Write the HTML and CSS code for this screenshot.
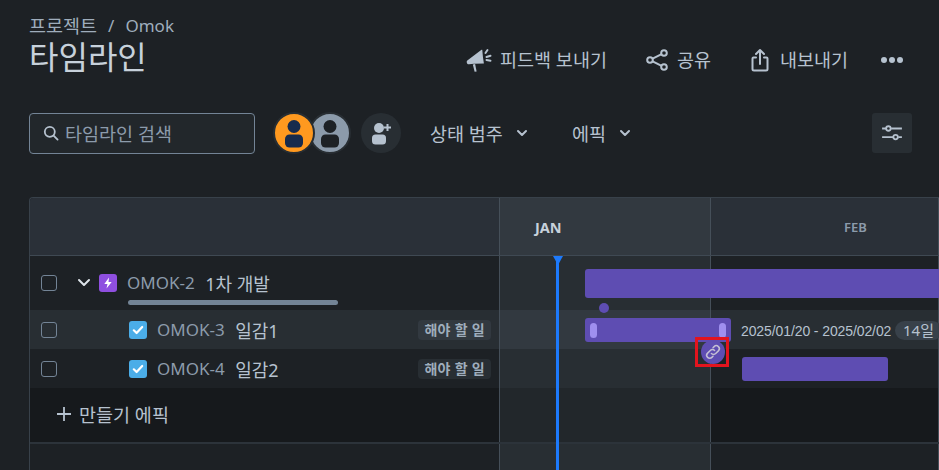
FILE: index.html
```html
<!DOCTYPE html>
<html lang="ko">
<head>
<meta charset="utf-8">
<title>타임라인</title>
<link rel="stylesheet" href="styles.css">
</head>
<body>
<div class="page">
  <header class="head">
    <div class="titles">
      <div class="crumbs"><span>프로젝트</span><span class="sep">/</span><span class="latin">Omok</span></div>
      <h1 class="title">타임라인</h1>
    </div>
    <div class="actions">
      <div class="action a-feedback">
        <svg class="ic" width="28" height="26" viewBox="0 0 28 26"><path fill="#b6c2cf" d="M1.300 13.500 15.500 2.800c.3-.3.8-.1.8.3.3 4.500.8 9 1.600 13.400L8 16.800 3 17.300c-2 .2-3-2.500-1.700-3.800z"/><path fill="#b6c2cf" d="M6.800 17.500l2.300-.4 1.500 7.300-2 .4z"/><path stroke="#b6c2cf" stroke-width="2" stroke-linecap="round" fill="none" d="M19.500 6l2-3M20.500 10l4-1.300M20.500 13l4 .7"/></svg>
        <span>피드백 보내기</span>
      </div>
      <div class="action a-share">
        <svg class="ic" width="24" height="24" viewBox="0 0 24 24" fill="none" stroke="#b6c2cf" stroke-width="2"><circle cx="19" cy="5" r="2.800"/><circle cx="19" cy="19" r="2.800"/><circle cx="5" cy="12" r="2.800"/><path d="M7.600 10.700l9-4.500M7.600 13.300l9 4.500"/></svg>
        <span>공유</span>
      </div>
      <div class="action a-export">
        <svg class="ic" width="20" height="24" viewBox="0 0 20 24" fill="none" stroke="#b6c2cf" stroke-width="2" stroke-linecap="round" stroke-linejoin="round"><path d="M6 9.500H3.500a1 1 0 0 0-1 1V21a1.500 1.500 0 0 0 1.500 1.500h12a1.500 1.500 0 0 0 1.500-1.500V10.500a1 1 0 0 0-1-1H14"/><path d="M10 16V2.500M6 6l4-4 4 4"/></svg>
        <span>내보내기</span>
      </div>
      <div class="more"><i></i><i></i><i></i></div>
    </div>
  </header>

  <div class="toolbar">
    <div class="search">
      <svg width="16" height="16" viewBox="0 0 16 16" fill="none" stroke="#b6c2cf" stroke-width="1.800" stroke-linecap="round"><circle cx="6.800" cy="6.800" r="5"/><path d="M10.600 10.600l4 4"/></svg>
      <span>타임라인 검색</span>
    </div>
    <div class="avatars">
      <div class="avatar av-orange">
        <svg width="38" height="38" viewBox="0 0 38 38"><circle cx="19" cy="12.500" r="6.500" fill="#172b4d"/><rect x="10" y="20.500" width="18" height="13" rx="4.500" fill="#172b4d"/></svg>
      </div>
      <div class="avatar av-grey">
        <svg width="38" height="38" viewBox="0 0 38 38"><circle cx="19" cy="12.500" r="6.500" fill="#1d2125"/><rect x="10" y="20.500" width="18" height="13" rx="4.500" fill="#1d2125"/></svg>
      </div>
    </div>
    <div class="add-user">
      <svg width="24" height="24" viewBox="0 0 24 24" fill="#b6c2cf"><circle cx="10" cy="7" r="5"/><rect x="3" y="13.500" width="14" height="10" rx="3.500"/><path d="M17.500 3h2v2.500H22v2h-2.500V10h-2V7.500H15v-2h2.500z"/></svg>
    </div>
    <div class="filter f-status"><span>상태 범주</span><svg class="chev" width="12" height="8" viewBox="0 0 12 8" fill="none" stroke="#b6c2cf" stroke-width="2" stroke-linecap="round" stroke-linejoin="round"><path d="M2 2l4 4 4-4"/></svg></div>
    <div class="filter f-epic"><span>에픽</span><svg class="chev" width="12" height="8" viewBox="0 0 12 8" fill="none" stroke="#b6c2cf" stroke-width="2" stroke-linecap="round" stroke-linejoin="round"><path d="M2 2l4 4 4-4"/></svg></div>
    <div class="settings">
      <svg width="22" height="18" viewBox="0 0 24 20" fill="none" stroke="#b6c2cf" stroke-width="2"><path d="M1 5h4.500M11 5h12M1 14.500h12.500M19 14.500h4"/><circle cx="8" cy="5" r="2.500"/><circle cx="16" cy="14.500" r="2.500"/></svg>
    </div>
  </div>

  <section class="grid">
    <div class="row r-head">
      <div class="left"></div>
      <div class="month m-jan"><span>JAN</span></div>
      <div class="month m-feb"><span>FEB</span></div>
    </div>

    <div class="row r-epic">
      <div class="left">
        <span class="check"></span>
        <svg class="expand" width="14" height="10" viewBox="0 0 14 10" fill="none" stroke="#dee4ea" stroke-width="2" stroke-linecap="round" stroke-linejoin="round"><path d="M2 2l5 5 5-5"/></svg>
        <span class="type t-epic"><svg width="12" height="12" viewBox="0 0 12 12"><path fill="#fff" d="M7 .5 2.300 7H5.500L4.500 11.500 9.700 5H6.500z"/></svg></span>
        <span class="key">OMOK-2</span>
        <span class="name">1차 개발</span>
        <span class="progress"></span>
      </div>
      <div class="month m-jan"></div>
      <div class="month m-feb"></div>
    </div>

    <div class="row r-task1">
      <div class="left">
        <span class="check"></span>
        <span class="type t-task"><svg width="12" height="10" viewBox="0 0 12 10" fill="none" stroke="#fff" stroke-width="2.200" stroke-linecap="round" stroke-linejoin="round"><path d="M1.800 5.300l2.800 2.700 5.600-6"/></svg></span>
        <span class="key">OMOK-3</span>
        <span class="name">일감1</span>
        <span class="lozenge">해야 할 일</span>
      </div>
      <div class="month m-jan"></div>
      <div class="month m-feb"></div>
    </div>

    <div class="row r-task2">
      <div class="left">
        <span class="check"></span>
        <span class="type t-task"><svg width="12" height="10" viewBox="0 0 12 10" fill="none" stroke="#fff" stroke-width="2.200" stroke-linecap="round" stroke-linejoin="round"><path d="M1.800 5.300l2.800 2.700 5.600-6"/></svg></span>
        <span class="key">OMOK-4</span>
        <span class="name">일감2</span>
        <span class="lozenge">해야 할 일</span>
      </div>
      <div class="month m-jan"></div>
      <div class="month m-feb"></div>
    </div>

    <div class="row r-create">
      <div class="left">
        <svg width="16" height="16" viewBox="0 0 16 16" stroke="#b6c2cf" stroke-width="1.800"><path d="M8 1v14M1 8h14"/></svg>
        <span>만들기 에픽</span>
      </div>
      <div class="month m-jan"></div>
      <div class="month m-feb"></div>
    </div>

    <div class="row r-empty">
      <div class="left"></div>
      <div class="month m-jan"></div>
      <div class="month m-feb"></div>
    </div>

    <div class="today"></div>
    <div class="marker"></div>
    <div class="bar bar-epic"></div>
    <div class="dot"></div>
    <div class="bar bar-task1"><i></i><i></i></div>
    <div class="dates">2025/01/20 - 2025/02/02</div>
    <div class="days">14일</div>
    <div class="bar bar-task2"></div>
    <div class="link">
      <svg width="18" height="18" viewBox="0 0 18 18" fill="none" stroke="#c4bfd4" stroke-width="1.500" stroke-linecap="round"><path d="M7.400 10.600a3 3 0 0 0 4.300 0l2.700-2.700a3 3 0 0 0-4.300-4.300L9 4.700"/><path d="M10.600 7.400a3 3 0 0 0-4.300 0l-2.700 2.700a3 3 0 0 0 4.300 4.300L9 13.300"/></svg>
    </div>
  </section>
</div>
</body>
</html>
```

FILE: styles.css
```css
*, *::after { box-sizing: border-box; }
html, body { margin: 0; height: 100%; overflow: hidden; }
body {
  background: #1d2125;
  color: #b6c2cf;
  font-family: "Noto Sans", "Noto Sans CJK KR", sans-serif;
  font-size: 18.5px;
}
.page { width: 939px; height: 470px; overflow: hidden; padding-top: 13px; }

.head { display: flex; align-items: flex-start; padding-left: 29px; height: 63px; }
.titles { width: 437px; flex: none; }
.crumbs { display: flex; gap: 11px; height: 25px; line-height: 25px; color: #9fadbc; font-size: 18.5px; }
.latin, .sep { font-size: 17px; }
.title { margin: 2px 0 0; font-family: "Liberation Sans", "Noto Sans CJK KR", sans-serif; font-size: 32px; line-height: 36px; font-weight: 400; color: #c7d1db; }
.actions { display: flex; align-items: center; height: 24px; margin-top: 35px; }
.action { display: flex; align-items: center; height: 24px; line-height: 24px; white-space: nowrap; }
.ic { flex: none; }
.a-feedback { gap: 6px; }
.a-share { gap: 8px; margin-left: 38px; }
.a-export { gap: 10px; margin-left: 39px; }
.more { display: flex; gap: 2px; margin-left: 33px; }
.more i { width: 6px; height: 6px; border-radius: 50%; background: #b6c2cf; }

.toolbar { display: flex; align-items: center; height: 42px; margin-top: 36px; padding-left: 29px; }
.search {
  display: flex; align-items: center; gap: 6px;
  width: 226px; height: 41px; padding-left: 13px;
  border: 1px solid #738496; border-radius: 4px; background: #22272b;
  color: #8c9bab;
}
.avatars { display: flex; margin-left: 18px; }
.avatar {
  width: 42px; height: 42px; padding: 2px; border-radius: 50%;
  border: 2px solid #282e33; overflow: hidden;
}
.avatar svg { display: block; margin: -2px; }
.av-orange { background: #ff991f; position: relative; z-index: 1; }
.av-grey { background: #8c9bab; margin-left: -6px; }
.add-user {
  display: flex; align-items: center; justify-content: center;
  width: 40px; height: 40px; margin-left: 10px; border-radius: 50%; background: #282e33;
}
.filter { display: flex; align-items: center; white-space: nowrap; color: #b6c2cf; }
.f-status { margin-left: 29px; gap: 13px; }
.f-epic { margin-left: 44px; gap: 13px; }
.settings {
  display: flex; align-items: center; justify-content: center;
  width: 40px; height: 40px; margin-left: auto; margin-right: 27px;
  background: #282e33; border-radius: 3px;
}

.grid { position: relative; width: 910px; margin: 43px 0 0 29px; border-left: 1px solid #38414a; border-top: 1px solid #38414a; border-radius: 4px 0 0 0; overflow: hidden; height: 300px; }
.row { display: grid; grid-template-columns: 470px 211px 1fr; }
.left { display: flex; align-items: center; position: relative; border-right: 1px solid #454f59; white-space: nowrap; }
.month { border-right: 1px solid #454f59; display: flex; align-items: center; font-weight: 700; }

.r-head { height: 58px; border-bottom: 1px solid #3f4953; }
.r-head .left { background: #2a3038; }
.r-head .m-jan { background: #323940; color: #c7d1db; font-size: 14.500px; padding-left: 35px; }
.r-head .m-feb { background: #2a3038; color: #8c9bab; font-weight: 600; font-size: 13px; padding-left: 133px; }

.r-epic { height: 54px; }
.r-epic .left { background: #1d2125; padding-bottom: 1px; }
.r-epic .m-jan { background: #282e33; }
.r-epic .m-feb { background: #1d2125; }

.r-task1 { height: 39px; }
.r-task1 .left { background: #282e33; }
.r-task1 .m-jan { background: #323940; }
.r-task1 .m-feb { background: #282e33; }

.r-task2 { height: 39px; }
.r-task2 .left { background: #1d2125; }
.r-task2 .m-jan { background: #282e33; }
.r-task2 .m-feb { background: #1d2125; }

.r-create { height: 56px; border-bottom: 2px solid #2c333a; }
.r-create .left { background: #16191c; padding-left: 26px; gap: 7px; color: #b6c2cf; padding-bottom: 2px; }
.r-create .m-jan { background: #22272b; }
.r-create .m-feb { background: #16191c; }

.r-empty { height: 30px; }
.r-empty .m-jan { background: #282e33; }

.check { flex: none; width: 16px; height: 16px; margin-left: 11px; border: 1.500px solid #738496; border-radius: 3px; }
.expand { flex: none; margin-left: 20px; }
.type { flex: none; display: flex; align-items: center; justify-content: center; width: 18px; height: 18px; border-radius: 3px; }
.t-epic { background: #8f4fe0; margin-left: 8px; }
.t-task { background: #4bade8; margin-left: 72px; }
.key { color: #8c9bab; font-size: 17px; margin-left: 10px; }
.name { color: #b6c2cf; font-size: 18px; margin-left: 10.500px; }
.progress { position: absolute; left: 98px; top: 44px; width: 210px; height: 5px; border-radius: 3px; background: #738496; }
.lozenge {
  position: absolute; right: 8px; top: 10px;
  height: 20px; line-height: 20px; padding: 0 6px; border-radius: 4px;
  background: #323940; color: #9fadbc; font-size: 14px; font-weight: 700; letter-spacing: .3px;
}
.r-task2 .lozenge { background: #282e33; }

.today { position: absolute; left: 526px; top: 59px; width: 3px; height: 240px; background: #1d7afc; }
.marker { position: absolute; left: 523px; top: 58px; width: 0; height: 0; border-left: 5px solid transparent; border-right: 5px solid transparent; border-top: 9px solid #1d7afc; }
.bar { position: absolute; background: #5e4db2; border-radius: 3px; }
.bar-epic { left: 555px; top: 71px; width: 400px; height: 29px; }
.dot { position: absolute; left: 569px; top: 105px; width: 10px; height: 10px; border-radius: 50%; background: #5e4db2; }
.bar-task1 { left: 555px; top: 120px; width: 146px; height: 24px; display: flex; justify-content: space-between; align-items: center; padding: 0 5px; }
.bar-task1 i { width: 7px; height: 15px; border-radius: 4px; background: #9f8fef; }
.bar-task2 { left: 712px; top: 159px; width: 146px; height: 24px; }
.dates { position: absolute; left: 711px; top: 122px; font-family: "Liberation Sans", sans-serif; font-size: 14px; letter-spacing: -.1px; line-height: 22px; color: #b6c2cf; white-space: nowrap; }
.days { position: absolute; left: 865px; top: 123px; height: 19px; line-height: 19px; padding: 0 8px; border-radius: 10px; background: #38414a; font-size: 15px; color: #b6c2cf; white-space: nowrap; }
.link {
  position: absolute; left: 671px; top: 142px; width: 24px; height: 24px;
  display: flex; align-items: center; justify-content: center;
  background: #5e4db2; border-radius: 50%;
}
.link::after {
  content: ""; position: absolute; left: -6px; top: -3px; width: 34px; height: 30px;
  border: 3px solid #e2141e;
}
```
